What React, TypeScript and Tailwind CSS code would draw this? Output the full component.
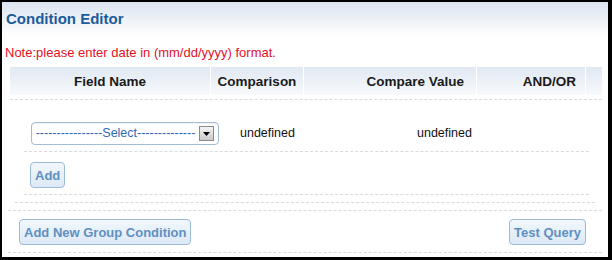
const COLUMNS = [
  { label: 'Field Name', w: 'w-[200px]', align: 'justify-center' },
  { label: 'Comparison', w: 'w-[92px]', align: 'justify-center' },
  { label: 'Compare Value', w: 'w-[172px]', align: 'justify-end pr-[12px]' },
  { label: 'AND/OR', w: 'w-[108px]', align: 'justify-end pr-[9px]' },
  { label: '', w: 'w-[16px]', align: '' },
]

function Button({ label }: { label: string }) {
  return (
    <button className="h-[26px] px-[4px] rounded-[4px] border border-[#9dbbd8] bg-gradient-to-b from-[#f1f7fc] to-[#dde9f5] text-[13px] font-bold leading-none text-[#5f8fc0]">
      {label}
    </button>
  )
}

function FieldSelect() {
  return (
    <div className="w-[188px] h-[23px] flex items-center rounded-[4px] border border-[#a3bbd3] bg-white shadow-[inset_0_1px_1px_rgba(0,0,0,0.06)]">
      <span className="flex-1 text-center text-[12.5px] leading-none text-[#2f68b4] whitespace-nowrap overflow-hidden">
        ----------------Select--------------
      </span>
      <span className="w-[15px] h-[15px] mr-[4px] flex items-center justify-center border border-[#8a8a8a] bg-gradient-to-b from-[#f4f4f4] to-[#c9c9c9]">
        <svg width="7" height="4" viewBox="0 0 7 4">
          <path d="M0 0H7L3.5 4Z" fill="#000" />
        </svg>
      </span>
    </div>
  )
}

export default function App() {
  return (
    <div className="w-[612px] h-[260px] bg-white border-black border-t-2 border-l-2 border-r-4 border-b-[3px] font-['Liberation_Sans',Arial,sans-serif] overflow-hidden">
      <div className="h-[34px] pt-[8px] pl-[4px] bg-gradient-to-b from-[#dbe4ef] to-white">
        <h1 className="text-[15px] leading-[17px] font-bold text-[#1b5b9d]">Condition Editor</h1>
      </div>

      <p className="mt-[10px] pl-[3px] text-[13px] leading-[14px] text-[#e3101f]">
        Note:please enter date in (mm/dd/yyyy) format.
      </p>

      {/* header */}
      <div className="mt-[7px] ml-[8px] w-[592px] pb-[4px] border-b border-dashed border-[#dadada]">
        <div className="flex gap-px h-[28px]">
          {COLUMNS.map((col, i) => (
            <div
              key={i}
              className={`${col.w} ${col.align} flex items-center pt-[3px] bg-gradient-to-b from-[#e0e8f2] to-[#f8fafc] text-[13.5px] font-bold text-[#1a1a1a]`}
            >
              {col.label}
            </div>
          ))}
        </div>
      </div>

      {/* group */}
      <div className="ml-[6px] w-[594px] pb-[7px] border-b border-dashed border-[#dadada]">
        <div className="ml-[7px] w-[580px] pb-[7px] border-b border-dashed border-[#dadada]">
          <div className="ml-[9px] w-[565px]">
            <div className="flex items-center pl-[7px] pt-[22px] pb-[6px] border-b border-dashed border-[#dadada] text-[12.5px] text-[#111]">
              <FieldSelect />
              <span className="w-[198px] pl-[21px]">undefined</span>
              <span>undefined</span>
            </div>
            <div className="pl-[6px] pt-[10px] pb-[6px] border-b border-dashed border-[#dadada]">
              <Button label="Add" />
            </div>
          </div>
        </div>
      </div>

      <div className="ml-[6px] w-[594px] flex justify-between pl-[11px] pr-[16px] pt-[8px] pb-[7px] border-b border-dashed border-[#dadada]">
        <Button label="Add New Group Condition" />
        <Button label="Test Query" />
      </div>
    </div>
  )
}
